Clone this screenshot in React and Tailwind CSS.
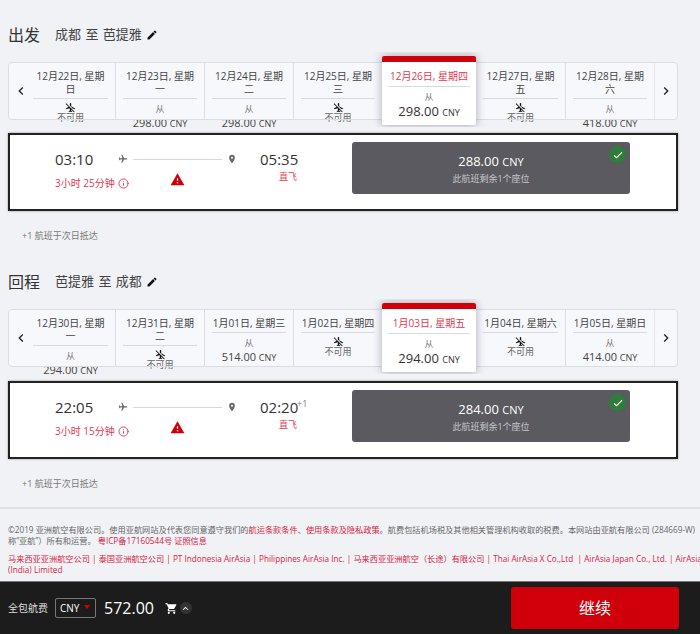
import React from "react";
import { MdEdit, MdFlight, MdPlace, MdWarning, MdShoppingCart, MdAirplanemodeInactive, MdCheck, MdChevronLeft, MdChevronRight, MdKeyboardArrowUp } from "react-icons/md";
import { Info } from "lucide-react";

function DateCell({ l1, l2, price, noBorder }) {
  return (
    <div className={`w-[89px] shrink-0 h-[58px] px-[7px] pt-[8px] text-center ${noBorder ? "" : "border-l border-[#dcdde3]"}`}>
      <div className="border-b border-[#d9dae0] pb-[2px] text-[10px] leading-[13px] text-[#444] whitespace-nowrap">
        <div>{l1}</div>
        {l2 && <div>{l2}</div>}
      </div>
      {price ? (
        <div className="mt-[3px] text-[#444]">
          <div className="text-[9px] leading-[13px] text-[#777]">从</div>
          <div className="text-[11px] leading-[15px] whitespace-nowrap">
            {price} <span className="text-[9px]">CNY</span>
          </div>
        </div>
      ) : (
        <div className="mt-[3px] flex flex-col items-center text-[#666]">
          <MdAirplanemodeInactive className="text-[11px] text-[#111]" />
          <div className="-mt-[2px] text-[9px] leading-[13px]">不可用</div>
        </div>
      )}
    </div>
  );
}

function SelectedCell({ l1, price }) {
  return (
    <div className="relative z-10 w-[94px] shrink-0 h-[69px] -mt-[6px] bg-white rounded-[2px] shadow-[0_0_10px_rgba(50,50,70,0.4)] text-center">
      <div className="h-[6px] bg-[#d0000b] rounded-t-[2px]" />
      <div className="px-[6px] pt-[8px]">
        <div className="border-b border-[#d9dae0] pb-[3px] text-[10px] leading-[13px] text-[#dc3a50] whitespace-nowrap">{l1}</div>
        <div className="mt-[3px] text-[9px] leading-[13px] text-[#777]">从</div>
        <div className="text-[13px] leading-[16px] text-[#333] whitespace-nowrap">
          {price} <span className="text-[9px]">CNY</span>
        </div>
      </div>
    </div>
  );
}

function Carousel({ before, selected, after }) {
  return (
    <div className="mt-[5px] h-[75px] overflow-hidden pt-[10px] px-[8px] -mx-[8px]">
      <div className="flex w-[670px] h-[58px] bg-[#f7f8fc] rounded-[4px] outline outline-1 -outline-offset-1 outline-[#dcdde3]">
        <div className="w-[18px] shrink-0 flex items-center justify-end">
          <MdChevronLeft className="text-[16px] text-[#222] -mr-[3px]" />
        </div>
        {before.map((c, i) => <DateCell key={i} {...c} noBorder={i === 0} />)}
        <SelectedCell {...selected} />
        {after.map((c, i) => <DateCell key={i} {...c} noBorder={i === 0} />)}
        <div className="flex-1 flex items-center justify-center border-l border-[#e6e7ec]">
          <MdChevronRight className="text-[16px] text-[#222] -ml-[1px]" />
        </div>
      </div>
    </div>
  );
}

function FlightCard({ dep, arr, dur, price, sup, top }) {
  return (
    <div className={`${top} w-[670px] h-[78px] bg-white border-2 border-[#222] shadow-[0_0_2px_rgba(0,0,0,0.4)] flex pl-[45px] pt-[7px]`}>
      <div className="w-[64px] shrink-0 pt-[7px]">
        <div className="text-[15px] leading-[20px] text-[#333]">{dep}</div>
        <div className="mt-[8px] flex items-center text-[10px] leading-[13px] text-[#e0394f] whitespace-nowrap">
          <span>{dur}</span>
          <Info className="ml-[3px] w-[11px] h-[11px] shrink-0" strokeWidth={2} />
        </div>
      </div>
      <div className="w-[116px] shrink-0 pt-[7px] flex flex-col items-center">
        <div className="w-full h-[20px] flex items-center">
          <MdFlight className="-ml-[1px] text-[10px] text-[#666] rotate-90 shrink-0" />
          <div className="ml-[5px] w-[89px] h-px bg-[#d6d7e2] shrink-0" />
          <MdPlace className="ml-[5px] text-[10px] text-[#666] shrink-0" />
        </div>
        <MdWarning className="mt-[3px] text-[15px] text-[#d0000b]" />
      </div>
      <div className="ml-[25px] w-[37px] shrink-0 pt-[7px] text-right">
        <div className="relative text-[15px] leading-[20px] text-[#333] text-left whitespace-nowrap">
          {arr}
          {sup && <span className="absolute left-full top-[1px] text-[9px] leading-[12px] text-[#777]">{sup}</span>}
        </div>
        <div className="mt-[2px] text-[9px] leading-[12px] text-[#e0394f]">直飞</div>
      </div>
      <div className="ml-[55px] relative w-[278px] h-[52px] bg-[#5a5a60] rounded-[3px] flex flex-col items-center pt-[10px]">
        <div className="text-[13px] leading-[18px] text-white whitespace-nowrap">
          {price} <span className="text-[11px]">CNY</span>
        </div>
        <div className="mt-[1px] text-[9px] leading-[14px] text-[#c4c4c8] whitespace-nowrap">此航班剩余1个座位</div>
        <div className="absolute right-[4px] top-[4px] w-[17px] h-[17px] rounded-full bg-[#2e7d3a] flex items-center justify-center">
          <MdCheck className="text-[12px] text-white" />
        </div>
      </div>
    </div>
  );
}

function Section({ title, route, children }) {
  return (
    <div>
      <div className="flex items-center h-[24px]">
        <span className="text-[16px] text-[#333]">{title}</span>
        <span className="ml-[15px] text-[13px] text-[#444] [word-spacing:1px]">{route}</span>
        <MdEdit className="ml-[4px] text-[12px] text-[#111]" />
      </div>
      {children}
      <div className="mt-[19px] ml-[14px] h-[12px] text-[9px] leading-[12px] text-[#777]">+1 航班于次日抵达</div>
    </div>
  );
}

const red = "text-[#d6233f]";

export default function App() {
  return (
    <div className="w-[700px] h-[634px] overflow-hidden flex flex-col bg-[#f1f2f6] font-['Open_Sans','Noto_Sans_CJK_SC',sans-serif]">
      <div className="h-[509px] shrink-0 pt-[23px] pl-[8px] flex flex-col gap-[28px] border-b-2 border-[#e0e1e6]">
        <Section title="出发" route="成都 至 芭提雅">
          <Carousel
            before={[
              { l1: "12月22日, 星期", l2: "日" },
              { l1: "12月23日, 星期", l2: "一", price: "298.00" },
              { l1: "12月24日, 星期", l2: "二", price: "298.00" },
              { l1: "12月25日, 星期", l2: "三" },
            ]}
            selected={{ l1: "12月26日, 星期四", price: "298.00" }}
            after={[
              { l1: "12月27日, 星期", l2: "五" },
              { l1: "12月28日, 星期", l2: "六", price: "418.00" },
            ]}
          />
          <FlightCard top="mt-[6px]" dep="03:10" arr="05:35" dur="3小时 25分钟" price="288.00" />
        </Section>
        <Section title="回程" route="芭提雅 至 成都">
          <Carousel
            before={[
              { l1: "12月30日, 星期", l2: "一", price: "294.00" },
              { l1: "12月31日, 星期", l2: "二" },
              { l1: "1月01日, 星期三", price: "514.00" },
              { l1: "1月02日, 星期四" },
            ]}
            selected={{ l1: "1月03日, 星期五", price: "294.00" }}
            after={[
              { l1: "1月04日, 星期六" },
              { l1: "1月05日, 星期日", price: "414.00" },
            ]}
          />
          <FlightCard top="mt-[7px]" dep="22:05" arr="02:20" sup="+1" dur="3小时 15分钟" price="284.00" />
        </Section>
      </div>
      <div className="flex-1 pl-[8px] pt-[15px] text-[8.2px] leading-[11px] text-[#666] whitespace-nowrap">
        <div>
          ©2019 亚洲航空有限公司。使用亚航网站及代表您同意遵守我们的<span className={red}>航运条款条件</span>、<span className={red}>使用条款及隐私政策</span>。航费包括机场税及其他相关管理机构收取的税费。本网站由亚航有限公司 (284669-W)（简
        </div>
        <div>
          称“亚航”）所有和运营。 <span className={red}>粤ICP备17160544号 证照信息</span>
        </div>
        <div className={`mt-[7px] ${red}`}>
          马来西亚亚洲航空公司 | 泰国亚洲航空公司 | PT Indonesia AirAsia | Philippines AirAsia Inc. | 马来西亚亚洲航空（长途）有限公司 | Thai AirAsia X Co.,Ltd &nbsp;| AirAsia Japan Co., Ltd. | AirAsia
        </div>
        <div className={red}>(India) Limited</div>
      </div>
      <div className="h-[53px] shrink-0 bg-[#1c1c1c] border-t border-[#777] flex items-center pl-[8px] pr-[21px]">
        <span className="text-[10px] text-[#ddd]">全包航费</span>
        <div className="ml-[7px] w-[41px] h-[20px] border border-[#777] rounded-[2px] flex items-center pl-[4px] text-[10px] text-white relative">
          CNY
          <span className="absolute right-[5px] top-[6px] w-0 h-0 border-l-[3px] border-r-[3px] border-t-[4px] border-l-transparent border-r-transparent border-t-[#d0000b]" />
        </div>
        <span className="ml-[8px] text-[16px] text-white">572.00</span>
        <MdShoppingCart className="ml-[11px] text-[13px] text-white" />
        <div className="ml-[2px] w-[12px] h-[12px] rounded-full bg-[#333] flex items-center justify-center">
          <MdKeyboardArrowUp className="text-[11px] text-white" />
        </div>
        <div className="ml-auto w-[168px] h-[42px] bg-[#d0000b] rounded-[3px] flex items-center justify-center text-[16px] text-white">继续</div>
      </div>
    </div>
  );
}
